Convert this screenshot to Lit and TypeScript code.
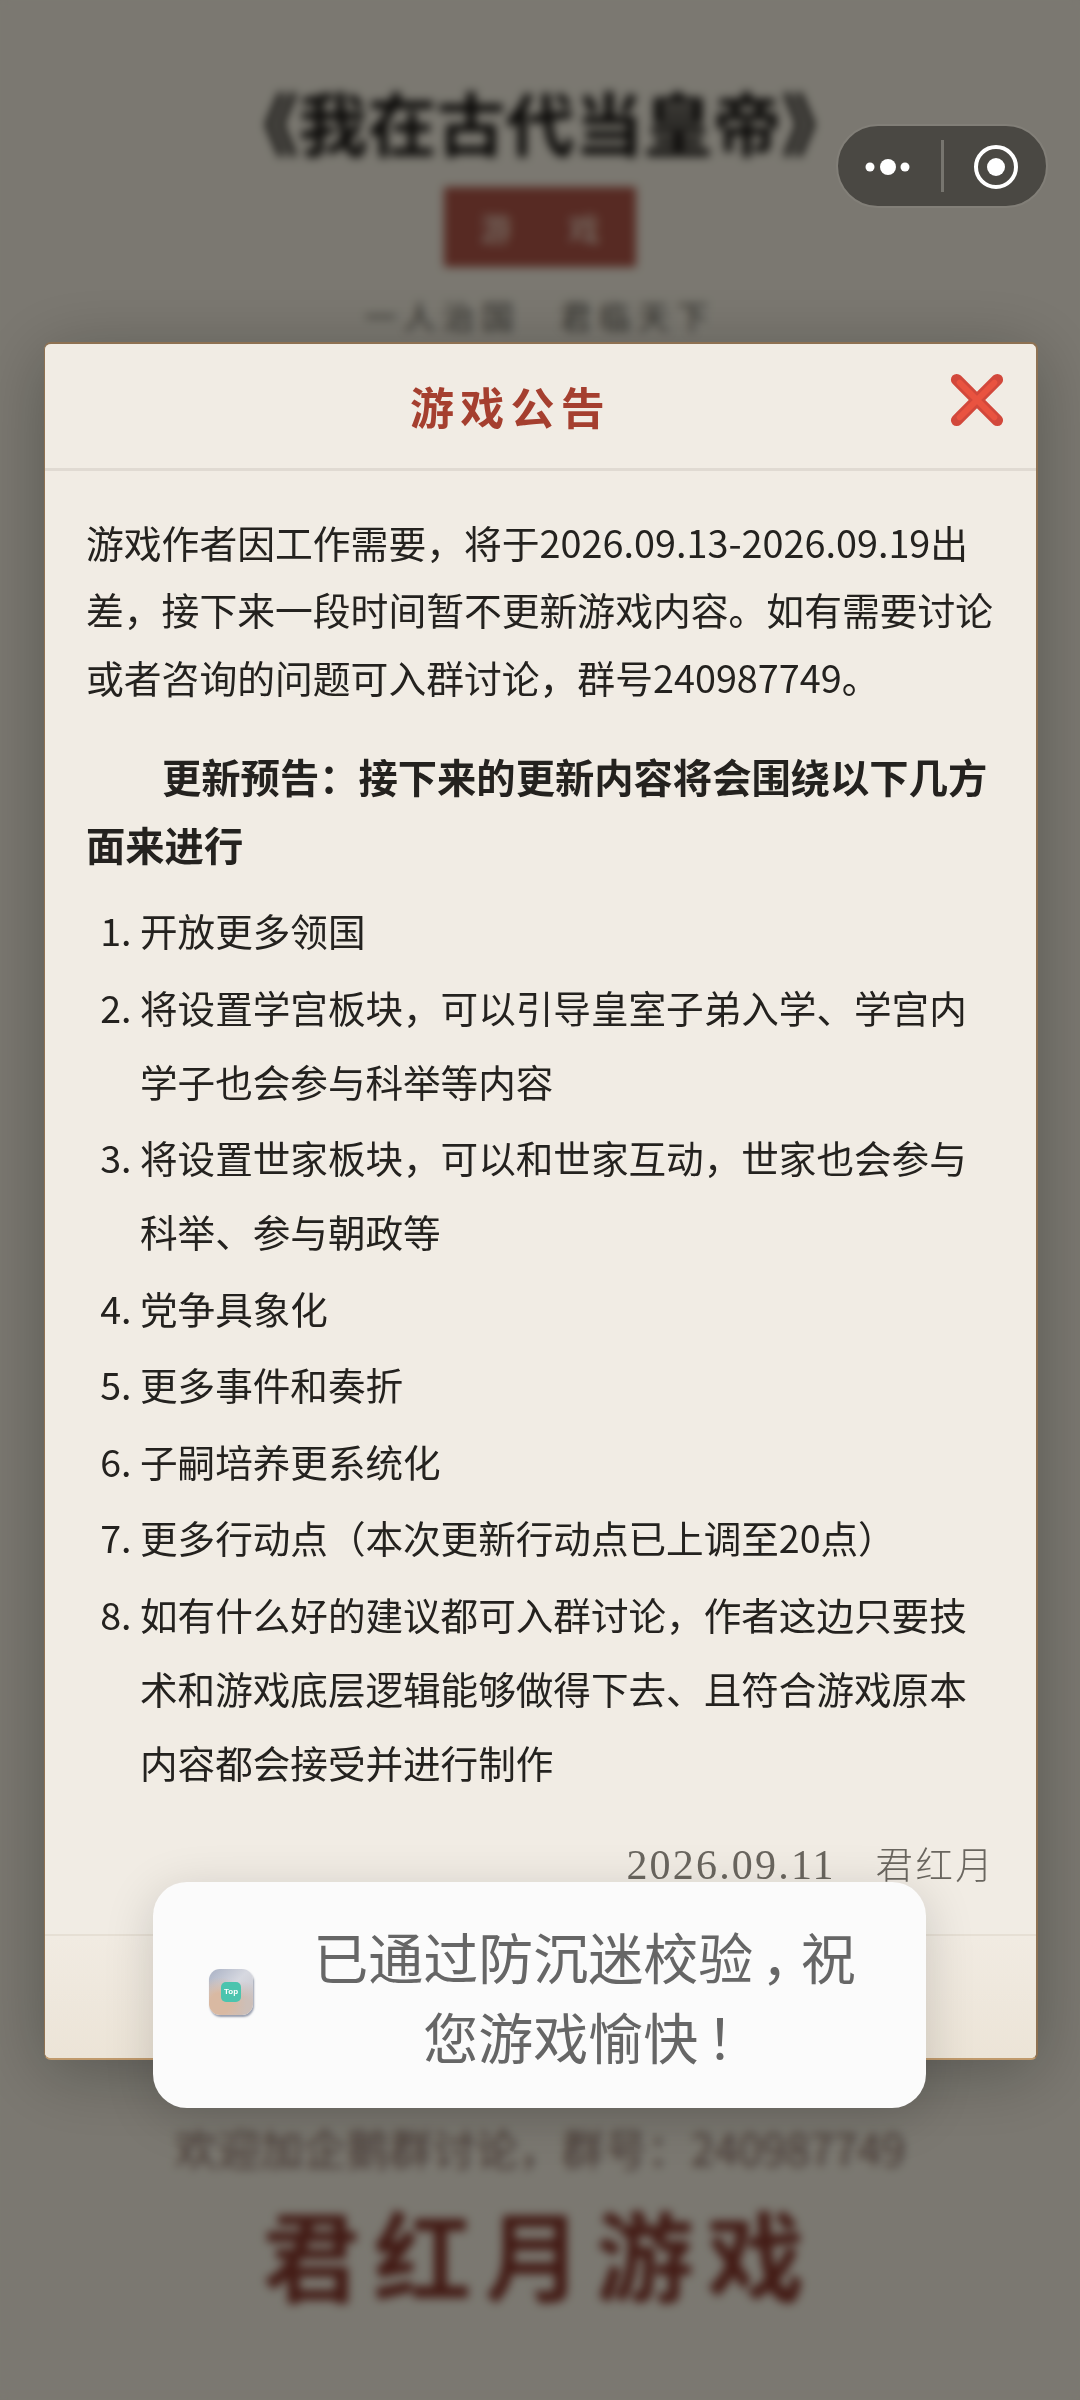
import { LitElement, html, css } from 'lit';
import { customElement } from 'lit/decorators.js';

const CJK = css`"Noto Sans CJK SC", "Noto Sans", sans-serif`;

const ITEMS: string[] = [
  '开放更多领国',
  '将设置学宫板块，可以引导皇室子弟入学、学宫内学子也会参与科举等内容',
  '将设置世家板块，可以和世家互动，世家也会参与科举、参与朝政等',
  '党争具象化',
  '更多事件和奏折',
  '子嗣培养更系统化',
  '更多行动点（本次更新行动点已上调至20点）',
  '如有什么好的建议都可入群讨论，作者这边只要技术和游戏底层逻辑能够做得下去、且符合游戏原本内容都会接受并进行制作',
];

@customElement('app-root')
export class AppRoot extends LitElement {
  static styles = css`
    :host {
      display: block;
      position: relative;
      width: 1080px;
      height: 2400px;
      overflow: hidden;
      font-family: ${CJK};
    }

    /* === Page behind the dialog, blurred by the overlay === */
    .page {
      height: 2400px;
      box-sizing: border-box;
      padding: 78px 0 84px;
      background: #f6f1e2;
      display: flex;
      flex-direction: column;
      justify-content: space-between;
      align-items: center;
      text-align: center;
    }
    .page-top, .page-bottom {
      display: flex;
      flex-direction: column;
      align-items: center;
    }
    .game-title {
      font-size: 69px;
      line-height: 86px;
      font-weight: 700;
      color: #14120f;
    }
    .start {
      width: 192px;
      height: 80px;
      margin-top: 23px;
      background: #ae5446;
      color: #f6e9d8;
      font-size: 32px;
      line-height: 80px;
      display: flex;
      justify-content: center;
      gap: 56px;
    }
    .slogan {
      margin-top: 23px;
      font-size: 32px;
      line-height: 50px;
      letter-spacing: 7px;
      color: #5c5a52;
    }
    .group {
      font-size: 43px;
      line-height: 60px;
      color: #8a6d62;
    }
    .brand {
      margin-top: 9px;
      font-size: 98px;
      line-height: 130px;
      font-weight: 700;
      letter-spacing: 13px;
      color: #86362a;
    }

    /* === Overlay and dialog === */
    .overlay {
      position: absolute;
      inset: 0;
      box-sizing: border-box;
      padding: 342px 42px 0 44px;
      background: rgba(0, 0, 0, 0.5);
      backdrop-filter: blur(5px);
    }
    .dialog {
      background: #f1ece4;
      border: solid #8e7152;
      border-width: 2px 2px 2px 1px;
      border-bottom-color: #c09a6c;
      border-radius: 7px;
      box-shadow: 0 12px 70px rgba(0, 0, 0, 0.28);
      overflow: hidden;
    }
    .head {
      height: 124px;
      display: flex;
      align-items: center;
      justify-content: space-between;
      padding: 0 30px 0 30px;
      border-bottom: 3px solid #e0dad2;
    }
    .head h2 {
      flex: 1;
      margin: 0;
      text-align: center;
      font-size: 44px;
      font-weight: 700;
      letter-spacing: 6.3px;
      color: #a53f2f;
    }
    .close {
      width: 58px;
      height: 58px;
      margin: 0 0 13px 2px;
      display: block;
    }

    .body {
      padding: 37px 41px 0;
      font-size: 37.8px;
      line-height: 67.4px;
      color: #24221f;
    }
    .body p { margin: 0; }
    .body .preview {
      margin-top: 32px;
      font-size: 39.3px;
      font-weight: 700;
      text-indent: 76px;
    }
    ol {
      margin: 16px 0 0;
      padding: 0 0 0 54px;
      font-size: 37.6px;
      line-height: 74px;
    }
    li { margin-bottom: 2.5px; }
    .sign {
      margin-top: 36px;
      text-align: right;
      font-family: "Liberation Serif", ${CJK};
      font-size: 42px;
      line-height: 56px;
      letter-spacing: 2.2px;
      color: #6a665f;
    }
    .sign-name {
      font-family: ${CJK};
      font-size: 37.4px;
      font-weight: 300;
      letter-spacing: 2.4px;
    }
    .foot {
      margin-top: 41px;
      height: 122px;
      border-top: 2px solid #e6dfd4;
      background: linear-gradient(#f1ebe2, #ece4d7);
    }

    /* === Capsule of the host app === */
    .capsule {
      position: absolute;
      left: 836px;
      top: 124px;
      width: 212px;
      height: 84px;
      box-sizing: border-box;
      border: 2px solid #827f78;
      border-radius: 42px;
      background: #4a4843;
      display: block;
    }

    /* === Toast === */
    .toast {
      position: absolute;
      left: 153px;
      top: 1882px;
      width: 773px;
      height: 226px;
      box-sizing: border-box;
      padding: 0 50px 0 56px;
      border-radius: 34px;
      background: #fbfbfb;
      box-shadow: 0 10px 50px rgba(0, 0, 0, 0.16);
      display: flex;
      align-items: center;
      gap: 40px;
    }
    .toast-icon {
      flex: none;
      width: 44px;
      height: 46px;
      margin-bottom: 6px;
      border-radius: 11px;
      background:
        radial-gradient(circle at 25% 75%, #d9b9a2 0 22%, transparent 55%),
        radial-gradient(circle at 75% 80%, #cdbfb8 0 18%, transparent 50%),
        linear-gradient(135deg, #a9b1c4, #d6d8e0 45%, #c6c2c8);
      box-shadow: 1px 2px 2px rgba(70, 80, 110, 0.55);
      display: flex;
      align-items: center;
      justify-content: center;
    }
    .toast-logo {
      width: 20px;
      height: 20px;
      border-radius: 5px;
      background: #4bc4ae;
      color: #fff;
      font-family: "Liberation Sans", sans-serif;
      font-size: 8px;
      font-weight: 700;
      line-height: 20px;
      text-align: center;
    }
    .toast-text {
      flex: 1;
      margin: 0;
      font-size: 55px;
      line-height: 80px;
      text-align: center;
      color: #666;
    }
    .punct {
      font-feature-settings: "halt";
      margin: 0 12px 0 8px;
    }
  `;

  render() {
    return html`
      <div class="page">
        <div class="page-top">
          <div class="game-title">《我在古代当皇帝》</div>
          <div class="start"><span>游</span><span>戏</span></div>
          <div class="slogan">一人治国　君临天下</div>
        </div>
        <div class="page-bottom">
          <div class="group">欢迎加企鹅群讨论，群号：240987749</div>
          <div class="brand">君红月游戏</div>
        </div>
      </div>

      <div class="overlay">
        <div class="dialog">
          <div class="head">
            <h2>游戏公告</h2>
            <svg class="close" viewBox="0 0 60 60">
              <g stroke-linecap="round" fill="none">
                <path d="M9 9 L51 51 M51 9 L9 51" stroke="#d2483b" stroke-width="12"/>
                <path d="M12 12 L48 48 M48 12 L12 48" stroke="#e95340" stroke-width="6"/>
              </g>
            </svg>
          </div>
          <div class="body">
            <p>游戏作者因工作需要，将于2026.09.13-2026.09.19出差，接下来一段时间暂不更新游戏内容。如有需要讨论或者咨询的问题可入群讨论，群号240987749。</p>
            <p class="preview">更新预告：接下来的更新内容将会围绕以下几方面来进行</p>
            <ol>${ITEMS.map((item) => html`<li>${item}</li>`)}</ol>
            <div class="sign">2026.09.11<span class="sign-name">　君红月</span></div>
          </div>
          <div class="foot"></div>
        </div>
      </div>

      <svg class="capsule" viewBox="0 0 208 80">
        <circle cx="32" cy="41" r="4.5" fill="#fff"/>
        <circle cx="50" cy="41" r="8" fill="#fff"/>
        <circle cx="67" cy="41" r="4.5" fill="#fff"/>
        <rect x="103" y="14" width="3" height="52" fill="#77756f"/>
        <circle cx="158" cy="41" r="20" fill="none" stroke="#fff" stroke-width="4"/>
        <circle cx="158" cy="41" r="9" fill="#fff"/>
      </svg>

      <div class="toast">
        <div class="toast-icon"><div class="toast-logo">Top</div></div>
        <p class="toast-text">已通过防沉迷校验<span class="punct">，</span>祝<br />您游戏愉快<span class="punct">！</span></p>
      </div>
    `;
  }
}
